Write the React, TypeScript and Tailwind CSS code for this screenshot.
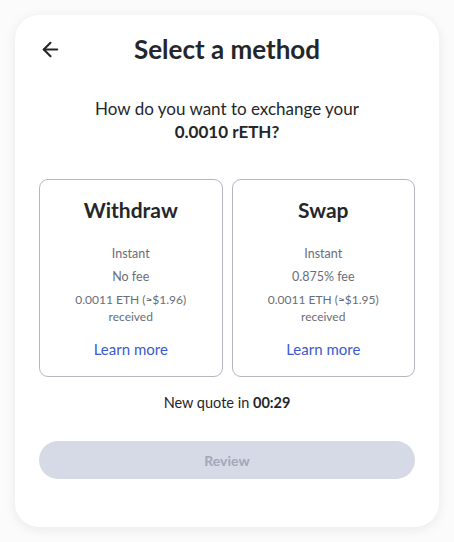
import { ArrowLeft } from "lucide-react";

const methods = [
  { name: "Withdraw", speed: "Instant", fee: "No fee", received: "0.0011 ETH (≈$1.96)" },
  { name: "Swap", speed: "Instant", fee: "0.875% fee", received: "0.0011 ETH (≈$1.95)" },
];

function MethodCard({ m }: { m: (typeof methods)[number] }) {
  return (
    <div className="flex flex-col items-center rounded-[9px] border border-[#b4b7c2] pt-[16px] pb-[16px] text-center">
      <h2 className="text-[21px] leading-[28px] font-bold text-[#24272a]">{m.name}</h2>
      <div className="mt-[21px] flex flex-col items-center text-[12.5px] leading-[18px] text-[#6a6d78]">
        <p>{m.speed}</p>
        <p className="mt-[5px]">{m.fee}</p>
        <p className="mt-[5px] text-[12px] leading-[17px]">
          {m.received}
          <br />
          received
        </p>
      </div>
      <a className="mt-[13px] text-[15px] leading-[22px] text-[#3a5ad0]" href="#">
        Learn more
      </a>
    </div>
  );
}

export default function App() {
  return (
    <div className="min-h-screen w-full bg-[#fbfbfb] p-[15px] font-['Lato',sans-serif]">
      <div className="flex h-[512px] w-[424px] flex-col rounded-[24px] bg-white px-[24px] pt-[18px] shadow-[0_2px_12px_rgba(0,0,0,0.08)]">
        <header className="relative flex h-[32px] items-center justify-center">
          <button className="absolute left-0 top-[5px] text-[#24272a]" aria-label="Back">
            <ArrowLeft className="h-[23px] w-[23px]" strokeWidth={2.2} />
          </button>
          <h1 className="text-[26px] leading-[32px] font-bold text-[#24272a]">Select a method</h1>
        </header>

        <p className="mt-[32px] text-center text-[17px] leading-[23px] text-[#24272a]">
          How do you want to exchange your
          <br />
          <span className="font-bold">0.0010 rETH?</span>
        </p>

        <div className="mt-[36px] grid grid-cols-2 gap-[9px]">
          {methods.map((m) => (
            <MethodCard key={m.name} m={m} />
          ))}
        </div>

        <p className="mt-[16px] text-center text-[14.5px] leading-[20px] text-[#24272a]">
          New quote in <span className="font-bold">00:29</span>
        </p>

        <button
          disabled
          className="mt-[28px] h-[38px] w-full rounded-full bg-[#d6d9e6] text-[14px] font-bold text-[#a3a7b8]"
        >
          Review
        </button>
      </div>
    </div>
  );
}
